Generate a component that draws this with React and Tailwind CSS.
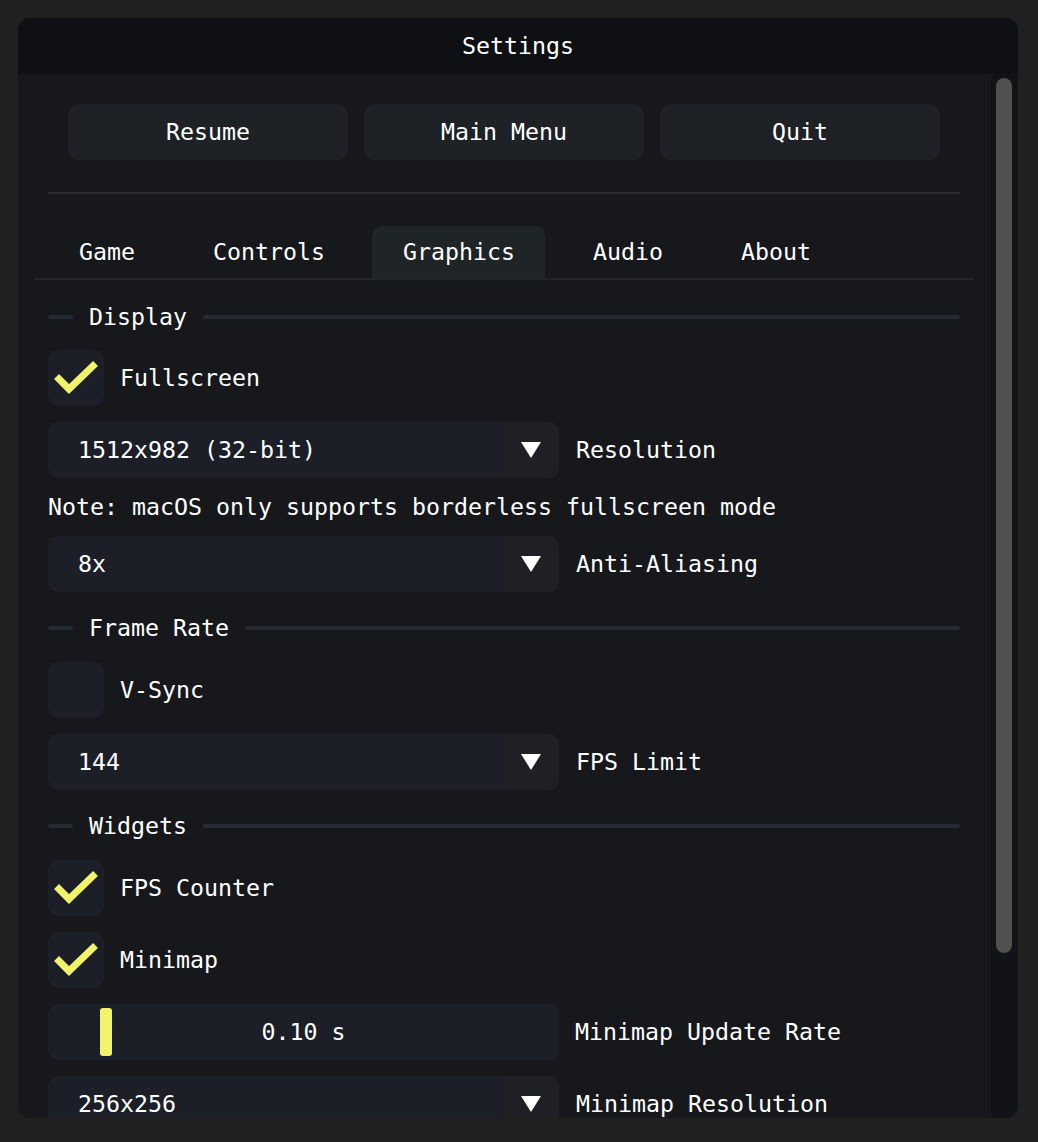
const FONT = "font-['DejaVu_Sans_Mono','Liberation_Mono',monospace]";

const Check = () => (
  <svg width="56" height="56" viewBox="0 0 56 56" className="block">
    <polyline
      points="11,29 21,39 45,16"
      fill="none"
      stroke="#f1f46b"
      strokeWidth="7"
      strokeLinecap="square"
      strokeLinejoin="miter"
    />
  </svg>
);

const Checkbox = ({ label, checked, className = "" }) => (
  <div className={`flex items-center h-14 ${className}`}>
    <div className="w-14 h-14 rounded-[10px] bg-[#1c1e28] shrink-0">
      {checked && <Check />}
    </div>
    <span className="ml-4 text-white">{label}</span>
  </div>
);

const Combo = ({ value, label, className = "" }) => (
  <div className={`flex items-center h-14 ${className}`}>
    <div className="flex w-[511px] h-14 rounded-[10px] overflow-hidden shrink-0">
      <div className="flex-1 flex items-center pl-[30px] bg-[#1c1f28] text-white">
        {value}
      </div>
      <div className="w-14 flex items-center justify-center bg-[#1e2024]">
        <svg width="20" height="16" viewBox="0 0 20 16">
          <polygon points="0,0 20,0 10,16" fill="#ffffff" />
        </svg>
      </div>
    </div>
    <span className="ml-[17px] text-white">{label}</span>
  </div>
);

const SectionHeader = ({ title, className = "" }) => (
  <div className={`flex items-center gap-4 h-10 ${className}`}>
    <div className="w-[25px] h-1 rounded-full bg-[#252a34]" />
    <span className="text-white">{title}</span>
    <div className="flex-1 h-1 rounded-full bg-[#252a34]" />
  </div>
);

const Slider = ({ value, label, className = "" }) => (
  <div className={`flex items-center h-14 ${className}`}>
    <div className="relative flex items-center justify-center w-[511px] h-14 rounded-[10px] bg-[#1c1f28] shrink-0 text-white">
      <div className="absolute left-[52px] top-1 w-3 h-12 rounded-[3px] bg-[#f1f46b]" />
      {value}
    </div>
    <span className="ml-4 text-white">{label}</span>
  </div>
);

const tabs = ["Game", "Controls", "Graphics", "Audio", "About"];

export default function App() {
  return (
    <div className={`w-[1038px] h-[1142px] bg-[#202020] p-[18px] ${FONT} text-[23.25px] leading-none`}>
      <div className="w-[1000px] h-[1100px] rounded-[12px] overflow-hidden flex flex-col bg-[#16181c]">
        {/* title bar */}
        <div className="h-14 shrink-0 bg-[#0e1013] flex items-center justify-center text-white">
          Settings
        </div>

        <div className="flex-1 flex min-h-0">
          {/* content */}
          <div className="flex-1 pl-[30px] pr-[31px] overflow-hidden">
            <div className="mt-[30px] flex justify-center gap-4">
              {["Resume", "Main Menu", "Quit"].map((b) => (
                <div
                  key={b}
                  className="w-[280px] h-14 rounded-[10px] bg-[#1e2226] flex items-center justify-center text-white"
                >
                  {b}
                </div>
              ))}
            </div>

            <div className="mt-8 h-[2px] bg-[#2a2d32]" />

            {/* tabs */}
            <div className="mt-8 -mx-[14px] px-[14px] border-b-2 border-[#22252a] flex gap-[17px]">
              {tabs.map((t) => (
                <div
                  key={t}
                  className={`h-[52px] pl-[31px] pr-[30px] flex items-center rounded-t-[10px] text-white ${
                    t === "Graphics" ? "bg-[#1f2427]" : ""
                  }`}
                >
                  {t}
                </div>
              ))}
            </div>

            <div className="flex flex-col">
              <SectionHeader title="Display" className="mt-[17px]" />
              <Checkbox label="Fullscreen" checked className="mt-[13px]" />
              <Combo value="1512x982 (32-bit)" label="Resolution" className="mt-4" />
              <div className="mt-4 h-[26px] flex items-center text-white">
                Note: macOS only supports borderless fullscreen mode
              </div>
              <Combo value="8x" label="Anti-Aliasing" className="mt-4" />

              <SectionHeader title="Frame Rate" className="mt-4" />
              <Checkbox label="V-Sync" className="mt-[14px]" />
              <Combo value="144" label="FPS Limit" className="mt-4" />

              <SectionHeader title="Widgets" className="mt-4" />
              <Checkbox label="FPS Counter" checked className="mt-[14px]" />
              <Checkbox label="Minimap" checked className="mt-4" />
              <Slider value="0.10 s" label="Minimap Update Rate" className="mt-4" />
              <Combo value="256x256" label="Minimap Resolution" className="mt-4" />
            </div>
          </div>

          {/* scrollbar */}
          <div className="w-[27px] shrink-0 bg-[#111316] pl-[5px] pt-1">
            <div className="w-4 h-[875px] rounded-full bg-[#505050]" />
          </div>
        </div>
      </div>
    </div>
  );
}
